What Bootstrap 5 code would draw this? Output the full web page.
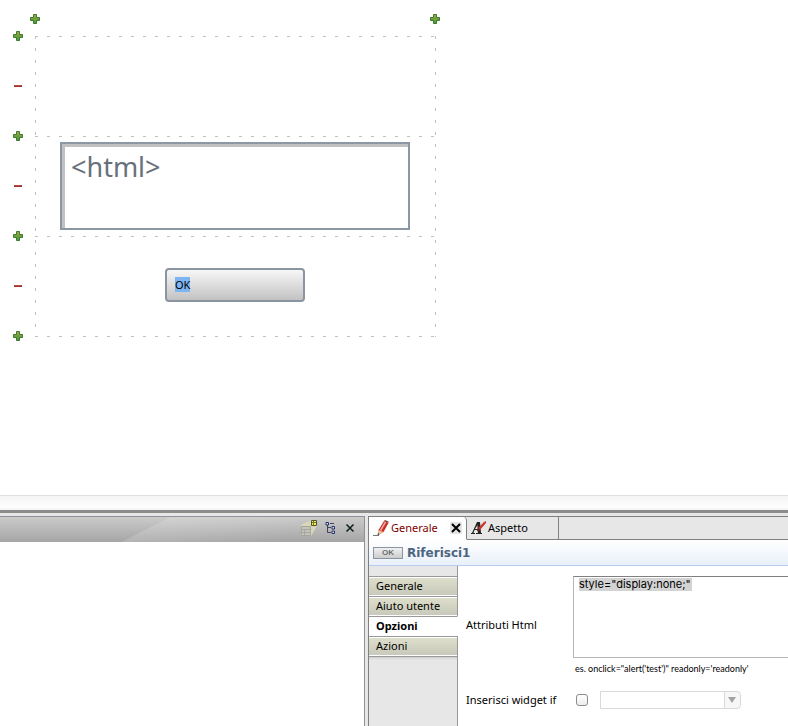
<!DOCTYPE html>
<html lang="it">
<head>
<meta charset="utf-8">
<meta name="viewport" content="width=device-width, initial-scale=1">
<title>Riferisci1</title>
<link href="https://cdn.jsdelivr.net/npm/bootstrap@5.3.0/dist/css/bootstrap.min.css" rel="stylesheet">
<style>
body{font-family:"Noto Sans","Open Sans",sans-serif;font-size:11px;line-height:14px;color:#000;background:#fff}
button{font:inherit;color:inherit}
svg{display:block}
.marks{width:30px;padding:11px 0 0 13px}
.marks button{height:50px}
.bare{border:0;background:none;padding:0}
.design{width:410px}
.ruler{padding-top:14px}
.cells{margin:12px 4px 0 5px;height:301px;
 background:
 repeating-linear-gradient(90deg,#c1c1c1 0 3px,transparent 3px 12px) 0 0/100% 1px no-repeat,
 repeating-linear-gradient(90deg,#c1c1c1 0 3px,transparent 3px 12px) 0 100px/100% 1px no-repeat,
 repeating-linear-gradient(90deg,#c1c1c1 0 3px,transparent 3px 12px) 0 200px/100% 1px no-repeat,
 repeating-linear-gradient(90deg,#c1c1c1 0 3px,transparent 3px 12px) 0 300px/100% 1px no-repeat,
 repeating-linear-gradient(#c1c1c1 0 3px,transparent 3px 12px) 0 0/1px 100% no-repeat,
 repeating-linear-gradient(#c1c1c1 0 3px,transparent 3px 12px) 100% 0/1px 100% no-repeat}
.cell{height:100px;padding:6px 26px 8px 25px}
.htmlbox{height:88px;border:2px solid #8b97a2;box-shadow:inset 3px 3px #c1c1c3;font-family:"Noto Sans",sans-serif;font-size:27px;line-height:32px;color:#68717b;padding:7px 9px}
.okbtn{width:140px;height:34px;border:2px solid #8b95a2;border-radius:4px;background:linear-gradient(#f8f7f8,#c2c2c2);text-align:left;padding:0 8px}
.okbtn mark{background:#7db5f2;color:#000;padding:0}
.sash{height:18px;border-top:1px solid #e0e0e0;border-bottom:3px solid #8b8d8b;background:linear-gradient(#f4f4f4,#fefefe 80%,#f2f2f2)}
.dock{background:#e7e7e7;padding-top:3px;height:213px}
.outline{width:365px;border-top:1px solid #919199;border-right:1px solid #919199;background:#fff}
.bar{height:25px;background:linear-gradient(153deg,transparent 77px,rgba(255,255,255,.16) 78px,transparent 150px),linear-gradient(#cbcbcb,#a5a5a5);padding:0 9px 3px 0}
.props{border-top:1px solid #808080;border-left:1px solid #808080;margin-left:3px;background:#fff;min-width:0}
.tabs{height:23px;background:#e7e7e7}
.tabs .tab{height:23px;border:0;border-right:1px solid #808080;border-bottom:1px solid #808080;background:none;padding:0;gap:2px}
.tabs .on{background:#fff;border-bottom-color:#fff;border-radius:0 4px 0 0;color:#800000;width:98px}
.tabs .off{width:92px}
.rest{border-bottom:1px solid #808080}
.title{height:26px;background:linear-gradient(#fff,#e9f0fb);border-bottom:1px solid #b9cbee;padding-left:4px}
.title h1{font-family:"DejaVu Sans",sans-serif;font-weight:700;font-size:12px;line-height:16px;color:#4d6580}
.chip{width:30px;height:12px;border:1px solid #8b95a2;background:linear-gradient(#f0f0f0,#ccc);font-family:"Liberation Sans",sans-serif;font-size:8px;line-height:10px;font-weight:700;color:#6a6e72}
.side{width:89px;background:#e7e7e7}
.pad{height:10px;border-right:1px solid #999}
.side button{height:20px;text-align:left;padding:0 7px 2px;border:0;border-top:1px solid #999;border-right:1px solid #999;background:linear-gradient(#fff 0 1px,#dddecb 1px,#c8c9ba 18px,#fff 18px)}
.side .on{background:#fff;border-right-color:#fff;font-weight:700}
.tail{border-top:1px solid #999;border-right:1px solid #999;background:linear-gradient(#cfcfcf,#e7e7e7 3px)}
.form{padding:10px 0 0 8px;min-width:0}
.lab{width:107px}
.tall{padding-top:16px}
.form textarea{height:82px;border:1px solid #b5b5b5;border-top-color:#808080;border-right:0;padding:0 5px;resize:none;outline:0;font-family:Inter,sans-serif;font-size:11px;line-height:14px;background:linear-gradient(#d3d3d3,#d3d3d3) 5px 1px/113px 13px no-repeat #fff}
.hint{font-family:Lato,sans-serif;font-size:9px;line-height:12px;margin:5px 0 0 109px}
.box{appearance:none;width:12px;height:12px;border:1px solid #8c8c8c;border-radius:3px;background:linear-gradient(#fff,#ededed);margin:0 12px 0 3px}
.pickwrap{width:141px;height:18px;border:1px solid #dadada;border-radius:0 4px 4px 0;background:linear-gradient(90deg,transparent 123px,#dadada 123px 124px,#f7f7f7 124px)}
.pickwrap select{appearance:none;border:0;background:none;width:123px;height:16px}
</style>
<script src="https://cdn.jsdelivr.net/npm/bootstrap@5.3.0/dist/js/bootstrap.bundle.min.js"></script>
</head>
<body class="d-flex flex-column min-vh-100 overflow-hidden">
<svg width="0" height="0" class="position-absolute" aria-hidden="true">
<defs>
<linearGradient id="g" x2="0" y2="1"><stop stop-color="#b0a84a"/><stop offset=".5" stop-color="#6fa03c"/><stop offset="1" stop-color="#459c3c"/></linearGradient>
<symbol id="plus" viewBox="0 0 10 10"><path d="M3.5.5h3v3h3v3h-3v3h-3v-3h-3v-3h3z" fill="url(#g)" stroke="#3c7a30"/></symbol>
<symbol id="minus" viewBox="0 0 10 10"><path d="M1 4h8v1H1z" fill="#c04a48"/><path d="M1 5h8v1H1z" fill="#983030"/></symbol>
</defs></svg>
<main class="flex-grow-1 d-flex align-items-start">
 <div class="marks d-flex flex-column">
  <button class="bare" aria-label="+"><svg width="10" height="10"><use href="#plus"/></svg></button>
  <button class="bare" aria-label="-"><svg width="10" height="10"><use href="#minus"/></svg></button>
  <button class="bare" aria-label="+"><svg width="10" height="10"><use href="#plus"/></svg></button>
  <button class="bare" aria-label="-"><svg width="10" height="10"><use href="#minus"/></svg></button>
  <button class="bare" aria-label="+"><svg width="10" height="10"><use href="#plus"/></svg></button>
  <button class="bare" aria-label="-"><svg width="10" height="10"><use href="#minus"/></svg></button>
  <button class="bare" aria-label="+"><svg width="10" height="10"><use href="#plus"/></svg></button>
 </div>
 <div class="design">
  <div class="ruler d-flex justify-content-between">
   <button class="bare" aria-label="+"><svg width="10" height="10"><use href="#plus"/></svg></button>
   <button class="bare" aria-label="+"><svg width="10" height="10"><use href="#plus"/></svg></button>
  </div>
  <div class="cells">
   <div class="cell"></div>
   <div class="cell"><div class="htmlbox">&lt;html&gt;</div></div>
   <div class="cell d-flex align-items-center justify-content-center"><button class="okbtn"><mark>OK</mark></button></div>
  </div>
 </div>
</main>
<div class="sash"></div>
<div class="dock d-flex">
 <section class="outline flex-shrink-0">
  <div class="bar d-flex align-items-center justify-content-end">
   <button class="bare" aria-label="Proprietà"><svg width="16" height="16" viewBox="0 0 16 16"><path d="M0 5 10 0h6v6l-6 10V6H0z" fill="#d9d8b6"/><path d="M.5 6.500h9v9h-9zM.5 9.500h9M.5 12.500h9M3.500 9.500v6" fill="#c4c4bc" stroke="#a6a69e"/><path d="M10.500.5h5v5h-5z" fill="#f4ec50" stroke="#555530"/><path d="M11 2.500h4M12.500 1v4" stroke="#77773c"/></svg></button>
   <button class="bare ms-2" aria-label="Struttura"><svg width="12" height="12" viewBox="0 0 12 12"><path d="M2.500 3v7.500H6M2.500 5.500H6M5 1.500h4" fill="none" stroke="#445"/><path d="M1 .5h2.500V3H1zM7 4.500h2.500V7H7zM7 9h2.500v2.500H7z" fill="#dde" stroke="#223070"/></svg></button>
   <button class="bare ms-2" aria-label="Chiudi"><svg width="10" height="10" viewBox="0 0 10 10"><path d="m1.500 1.500 7 7M8.500 1.500l-7 7" stroke="#102010" stroke-width="1.500"/></svg></button>
  </div>
 </section>
 <section class="props flex-grow-1 d-flex flex-column">
  <div class="tabs d-flex">
   <button class="tab on d-flex align-items-center ps-1"><svg width="16" height="16" viewBox="0 0 16 16"><path d="M0 15.500h6" stroke="#777"/><path d="m5 15 .5-5L11 1l4.500 2-5 9z" fill="#c9302a"/><path d="m7.500 10.500 5-8.500" stroke="#f2a49a" stroke-width="1.500"/><path d="m4.500 15.500 1-5.500 5 2z" fill="#e6c49a"/><path d="m4.500 15.500.5-2.500 1.500 1z" fill="#333"/><path d="m11 1 1-1 3.500 1.500V3z" fill="#7a4038"/></svg><span>Generale</span><svg class="ms-auto me-1" width="12" height="12" viewBox="0 0 12 12"><path fill="#e4e4e4" d="M0 0h12v12H0z"/><path d="m2 2 8 8M10 2l-8 8" stroke="#000" stroke-width="2"/></svg></button>
   <button class="tab off d-flex align-items-center ps-1"><svg width="15" height="14" viewBox="0 0 15 14"><path d="M0 12h4v1H0zM5 12h6v1H5zM1 12 6 1h3l1 11H7L6.500 9h-3L2.500 12zM4 8h2.500V4z" fill="#222" fill-rule="evenodd"/><path d="m6 10 1.500-3.500L13 1l2-1v2L9 9z" fill="#c8382e"/><path d="m6 10 1.500-3.500L9 9z" fill="#5a2a22"/></svg><span>Aspetto</span></button>
   <div class="rest flex-grow-1"></div>
  </div>
  <div class="title d-flex align-items-center"><span class="chip text-center">OK</span><h1 class="m-0 ps-1">Riferisci1</h1></div>
  <div class="d-flex flex-grow-1">
   <nav class="side d-flex flex-column flex-shrink-0">
    <div class="pad"></div>
    <button>Generale</button><button>Aiuto utente</button><button class="on">Opzioni</button><button>Azioni</button>
    <div class="tail flex-grow-1"></div>
   </nav>
   <form class="form flex-grow-1">
    <div class="d-flex align-items-center"><label class="lab tall flex-shrink-0" for="attr">Attributi Html</label><textarea id="attr" class="flex-grow-1" spellcheck="false">style="display:none;"</textarea></div>
    <p class="hint">es. onclick="alert('test')" readonly='readonly'</p>
    <div class="d-flex align-items-center mt-3"><label class="lab" for="cond">Inserisci widget if</label><input id="cond" class="box" type="checkbox"><div class="pickwrap d-flex align-items-center"><select aria-label="Widget"></select><svg class="ms-1" width="8" height="6" viewBox="0 0 8 6"><path d="M0 0h8L4 6z" fill="#a3a3a3"/></svg></div></div>
   </form>
  </div>
 </section>
</div>
</body>
</html>
